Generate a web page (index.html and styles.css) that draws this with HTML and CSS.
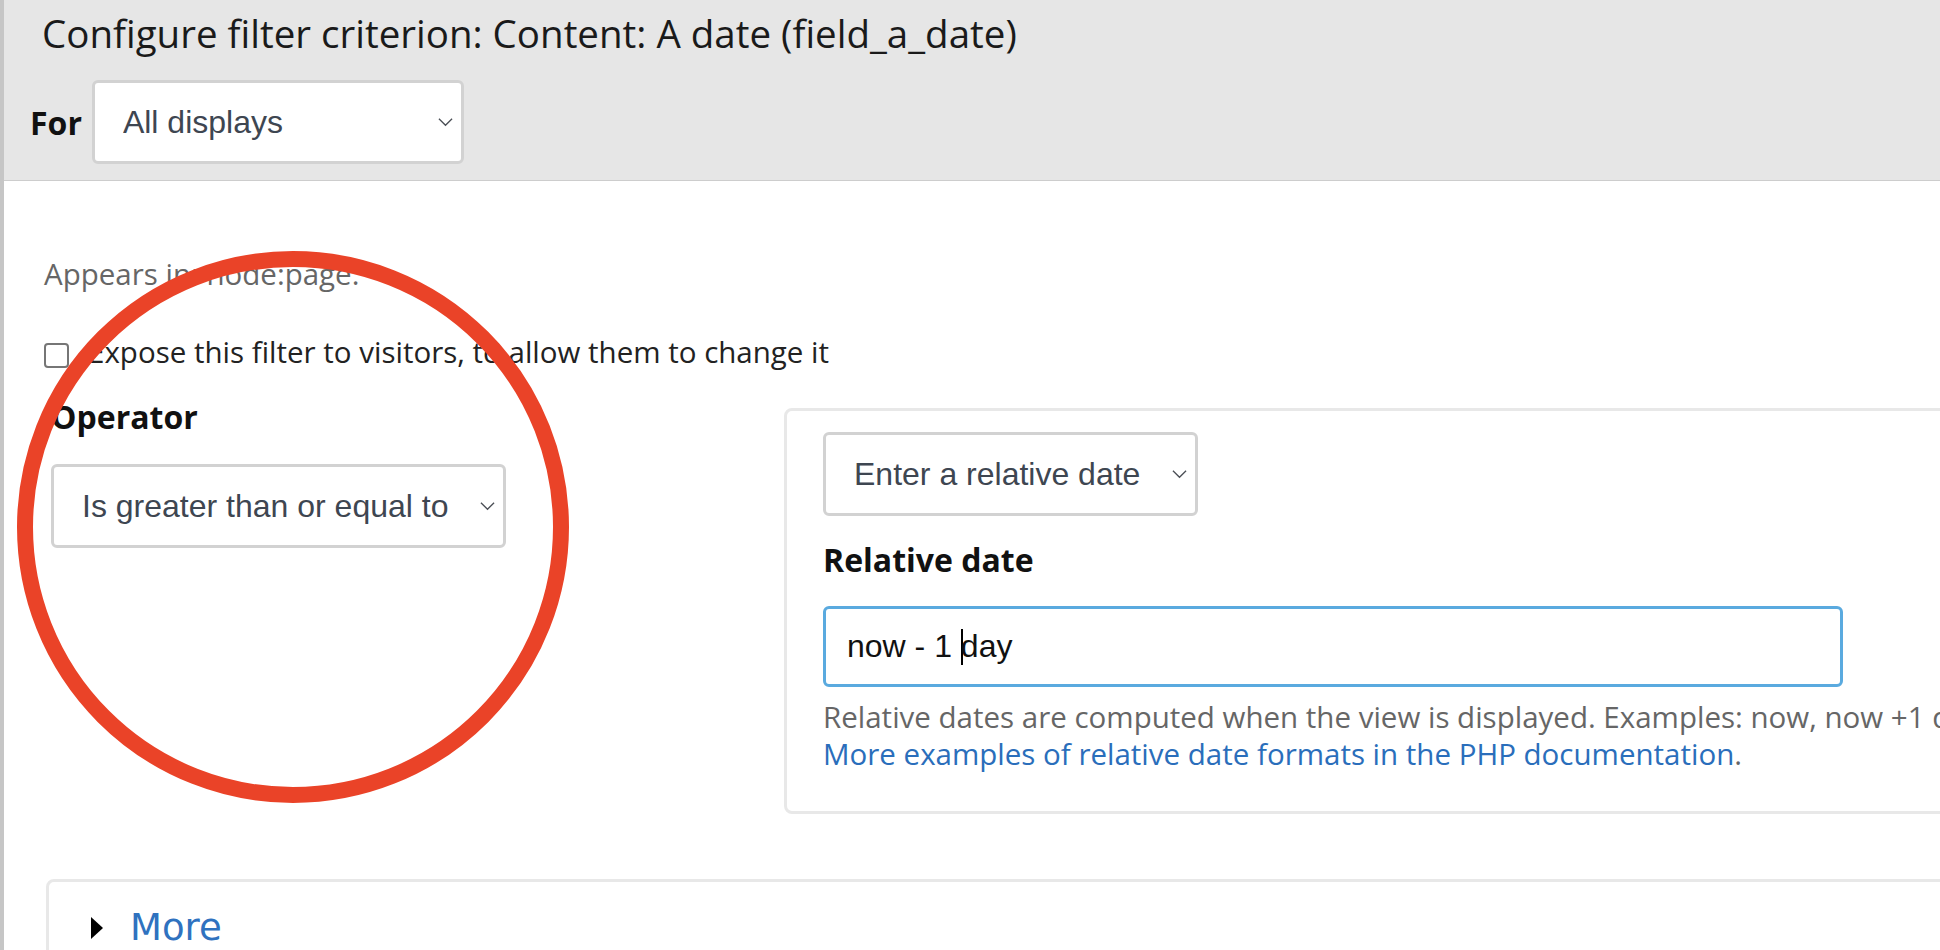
FILE: index.html
```html
<!DOCTYPE html>
<html lang="en">
<head>
    <meta charset="UTF-8">
    <meta name="viewport" content="width=device-width, initial-scale=1.0">
    <title>Configure filter criterion</title>
    <link rel="stylesheet" href="styles.css">
</head>
<body>
    <div class="dialog">
        <div class="dialog-head">
            <h1 class="dialog-title">Configure filter criterion: Content: A date (field_a_date)</h1>
            <div class="override">
                <label class="override-label" for="display">For</label>
                <span class="select-wrap">
                    <select id="display" class="form-select">
                        <option>All displays</option>
                    </select>
                    <svg class="chevron" viewBox="0 0 16 10"><path d="M1 1.5 L8 8.5 L15 1.5"/></svg>
                </span>
            </div>
        </div>

        <div class="dialog-body">
            <p class="appears">Appears in: node:page.</p>

            <div class="expose">
                <input type="checkbox" id="expose" class="form-checkbox">
                <label for="expose">Expose this filter to visitors, to allow them to change it</label>
            </div>

            <div class="filter-row">
                <div class="operator">
                    <label class="form-label" for="operator">Operator</label>
                    <span class="select-wrap">
                        <select id="operator" class="form-select">
                            <option>Is greater than or equal to</option>
                        </select>
                        <svg class="chevron" viewBox="0 0 16 10"><path d="M1 1.5 L8 8.5 L15 1.5"/></svg>
                    </span>
                </div>

                <fieldset class="value-box">
                    <span class="select-wrap">
                        <select class="form-select">
                            <option>Enter a relative date</option>
                        </select>
                        <svg class="chevron" viewBox="0 0 16 10"><path d="M1 1.5 L8 8.5 L15 1.5"/></svg>
                    </span>
                    <label class="form-label value-label">Relative date</label>
                    <div class="text-input"><span class="text-value">now - 1 <span class="caret"></span>day</span></div>
                    <div class="description">
                        <div>Relative dates are computed when the view is displayed. Examples: now, now +1 day, 12AM today, Monday next week.</div>
                        <div><a href="#">More examples of relative date formats in the PHP documentation</a>.</div>
                    </div>
                </fieldset>
            </div>

            <details class="more">
                <summary>More</summary>
            </details>
        </div>

        <div class="annotation"></div>
    </div>
</body>
</html>
```

FILE: styles.css
```css
body {
    margin: 0;
    padding: 0;
    font-family: "Open Sans", sans-serif;
    color: #222;
    background-color: #fff;
    overflow: hidden;
}

.dialog {
    position: relative;
    width: 2400px;
    min-height: 950px;
    border-left: 4px solid #c6c6c6;
}

.dialog-head {
    background-color: #e6e6e6;
    border-bottom: 1px solid #cdcdcd;
    padding: 7px 0 16px 26px;
}

.dialog-title {
    margin: 0 0 21px 12px;
    font-size: 38.5px;
    font-weight: 400;
    line-height: 52px;
    color: #1a1a1a;
}

.override {
    display: flex;
    align-items: center;
    gap: 10px;
}

.override-label {
    font-size: 32px;
    font-weight: 700;
    color: #111;
}

.select-wrap {
    position: relative;
    display: inline-block;
}

.form-select {
    -webkit-appearance: none;
    appearance: none;
    box-sizing: border-box;
    height: 84px;
    min-width: 372px;
    margin: 0;
    padding: 0 54px 0 28px;
    border: 3px solid #d2d2d2;
    border-radius: 6px;
    background-color: #fff;
    font-family: "Liberation Sans", Arial, sans-serif;
    font-size: 32px;
    color: #3e4651;
}

.chevron {
    position: absolute;
    right: 11px;
    top: 50%;
    width: 15px;
    height: 10px;
    margin-top: -5px;
    fill: none;
    stroke: #4b4f56;
    stroke-width: 1.4;
    pointer-events: none;
}

.dialog-body {
    padding: 73px 0 0 40px;
}

.appears {
    margin: 0;
    font-size: 29.5px;
    line-height: 40px;
    color: #666;
}

.expose {
    display: flex;
    align-items: flex-start;
    margin-top: 38px;
    font-size: 29.5px;
    line-height: 40px;
}

.form-checkbox {
    -webkit-appearance: none;
    appearance: none;
    box-sizing: border-box;
    width: 25px;
    height: 25px;
    margin: 11px 19px 0 0;
    border: 2px solid #767676;
    border-radius: 4px;
    background-color: #fff;
}

.filter-row {
    display: flex;
    align-items: flex-start;
    margin-top: 23px;
}

.operator {
    margin-left: 7px;
    width: 733px;
    flex-shrink: 0;
}

.form-label {
    display: block;
    font-size: 32px;
    font-weight: 700;
    line-height: 44px;
    color: #111;
    margin: 0 0 25px;
}

.value-box {
    box-sizing: border-box;
    width: 1400px;
    flex-shrink: 0;
    margin: 13px 0 0;
    padding: 21px 36px 39px;
    border: 3px solid #e8e8e8;
    border-radius: 8px;
    min-width: 0;
}

.value-label {
    margin: 22px 0 24px;
}

.text-input {
    box-sizing: border-box;
    display: flex;
    align-items: center;
    width: 1020px;
    height: 81px;
    padding: 0 21px;
    border: 3px solid #5aaadf;
    border-radius: 6px;
    font-family: "Liberation Sans", Arial, sans-serif;
    font-size: 32px;
    color: #111;
}

.text-value {
    white-space: pre;
}

.caret {
    display: inline-block;
    width: 2px;
    height: 36px;
    margin-right: -2px;
    vertical-align: -8px;
    background-color: #000;
}

.description {
    margin-top: 11px;
    font-size: 29.5px;
    line-height: 37px;
    color: #666;
    white-space: nowrap;
}

.description a {
    color: #2a6ebb;
    text-decoration: none;
}

.more {
    width: 2200px;
    margin: 65px 0 0 2px;
    border: 3px solid #e8e8e8;
    border-radius: 8px;
}

.more summary {
    display: flex;
    align-items: center;
    list-style: none;
    padding: 24px 0 20px 42px;
    font-family: "DejaVu Sans", sans-serif;
    font-size: 37px;
    color: #2f72bf;
    cursor: pointer;
}

.more summary::-webkit-details-marker {
    display: none;
}

.more summary::before {
    content: "";
    margin-right: 27px;
    border-left: 12px solid #000;
    border-top: 11.5px solid transparent;
    border-bottom: 11.5px solid transparent;
}

.annotation {
    position: absolute;
    left: 13px;
    top: 251px;
    width: 552px;
    height: 552px;
    box-sizing: border-box;
    border: 16px solid #ea4328;
    border-radius: 50%;
    pointer-events: none;
}
```
